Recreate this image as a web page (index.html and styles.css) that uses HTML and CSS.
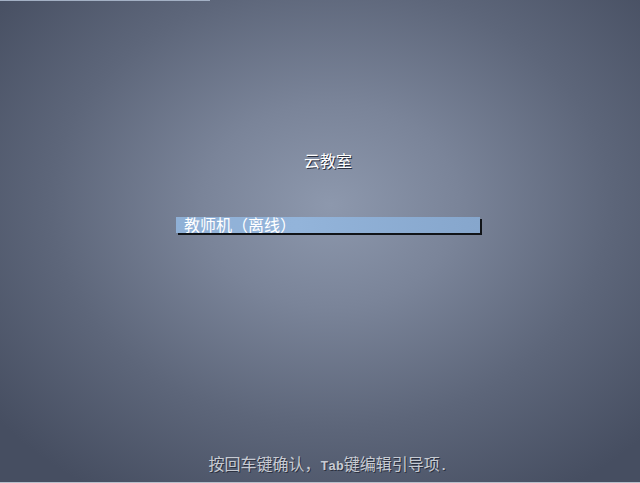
FILE: index.html
```html
<!DOCTYPE html>
<html lang="zh-CN">
<head>
<meta charset="utf-8">
<title>云教室</title>
<link rel="stylesheet" href="styles.css">
</head>
<body>
<div class="screen">
  <div class="topline"></div>
  <div class="content">
    <div class="title">云教室</div>
    <div class="menu">
      <div class="item selected">教师机（离线）</div>
    </div>
    <div class="spacer"></div>
    <div class="hint">按回车键确认，<span class="latin">Tab</span>键编辑引导项<span class="latin">.</span></div>
  </div>
  <div class="bottomline"></div>
</div>
</body>
</html>
```
FILE: styles.css
```css
html, body {
  margin: 0;
  padding: 0;
}
body {
  width: 640px;
  height: 483px;
  overflow: hidden;
  font-family: "Noto Sans CJK SC", "DejaVu Sans", sans-serif;
  font-size: 16px;
  line-height: 16px;
}
.screen {
  width: 640px;
  height: 483px;
  display: flex;
  flex-direction: column;
  background: radial-gradient(ellipse 430px 340px at 330px 205px, #8d98ad 0%, #7a8499 30%, #5d667a 65%, #464e61 100%);
  background-color: #454c5e;
}
.topline {
  height: 1px;
  width: 210px;
  background: #a3b0c4;
  flex: none;
}
.bottomline {
  height: 1px;
  background: #b8c0cc;
  flex: none;
}
.content {
  flex: 1;
  display: flex;
  flex-direction: column;
  align-items: center;
  padding-left: 16px;
}
.title {
  margin-top: 151px;
  color: #ffffff;
  text-shadow: 1px 1px 0 #2a3040;
  height: 18px;
}
.menu {
  margin-top: 47px;
  width: 304px;
}
.item {
  height: 16px;
  padding-left: 8px;
  color: #ffffff;
  box-sizing: border-box;
  line-height: 14px;
}
.selected {
  background: linear-gradient(90deg, #8fb0d6, #93b4da 40%, #86a6cc);
  box-shadow: 2px 2px 0 #111418;
}
.spacer {
  flex: 1;
}
.hint {
  margin-bottom: 7px;
  color: #c7cbd3;
  text-shadow: 1px 1px 0 #2c3140;
}
.latin {
  font-family: "Liberation Mono", monospace;
  font-weight: bold;
  font-size: 13px;
}
```
